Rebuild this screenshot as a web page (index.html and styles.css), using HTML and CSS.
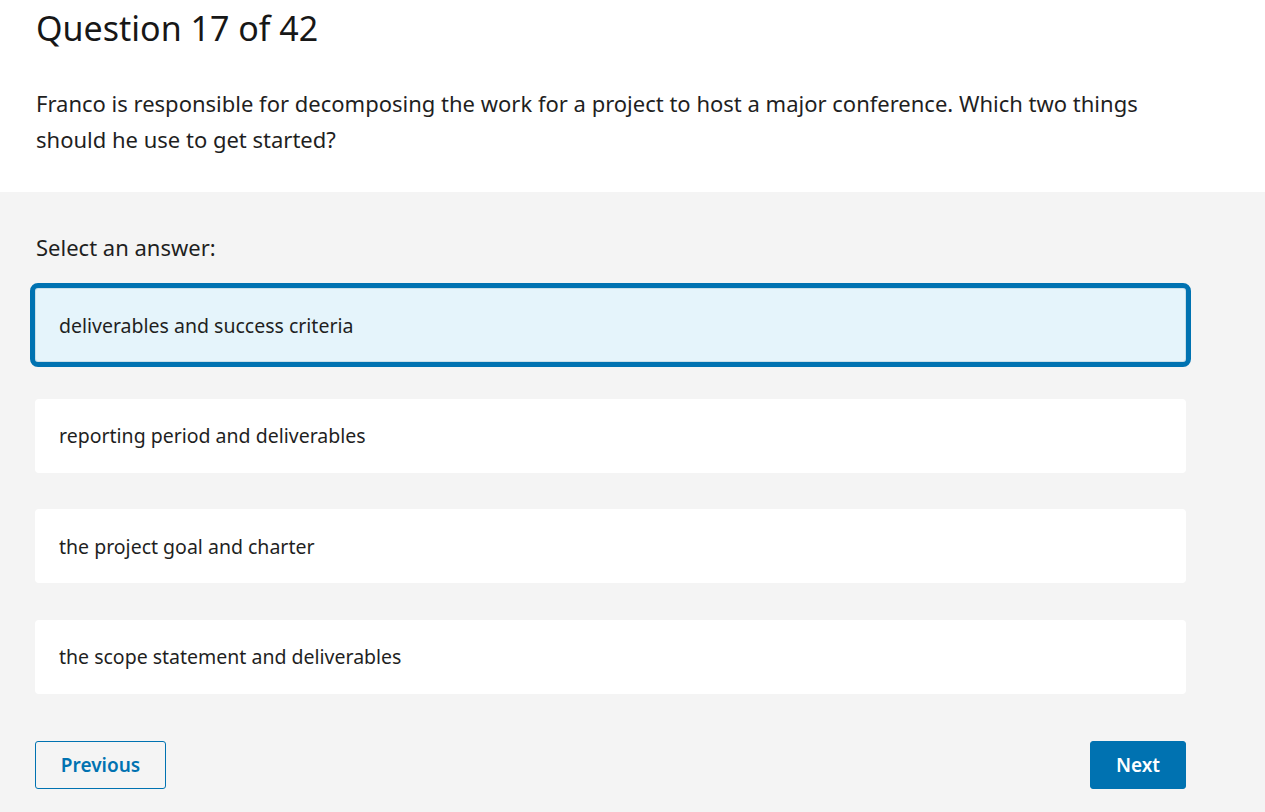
FILE: index.html
```html
<!DOCTYPE html>
<html lang="en">
<head>
<meta charset="utf-8">
<title>Question 17 of 42</title>
<link rel="stylesheet" href="styles.css">
</head>
<body>
<header class="top">
  <h1 class="title">Question 17 of 42</h1>
  <p class="question">Franco is responsible for decomposing the work for a project to host a major conference. Which two things should he use to get started?</p>
</header>
<main class="answers">
  <p class="prompt">Select an answer:</p>
  <div class="options">
    <button class="option selected">deliverables and success criteria</button>
    <button class="option">reporting period and deliverables</button>
    <button class="option">the project goal and charter</button>
    <button class="option">the scope statement and deliverables</button>
  </div>
  <div class="nav">
    <button class="btn btn-prev">Previous</button>
    <button class="btn btn-next">Next</button>
  </div>
</main>
</body>
</html>
```
FILE: styles.css
```css
html, body {
  margin: 0;
  padding: 0;
  height: 100%;
}
body {
  font-family: "Noto Sans", "Open Sans", sans-serif;
  color: #1f1f1f;
  background: #f4f4f4;
}
.top {
  background: #ffffff;
  padding: 6px 36px 0 36px;
  height: 186px;
}
.title {
  margin: 0;
  font-weight: 400;
  font-size: 34px;
  line-height: 44px;
  color: #171717;
}
.question {
  margin: 35px 0 0 0;
  font-size: 22px;
  line-height: 36px;
  width: 1150px;
}
.answers {
  padding: 38px 0 0 35px;
  width: 1151px;
}
.prompt {
  margin: 0 0 0 1px;
  font-size: 22px;
  line-height: 34px;
}
.options {
  display: flex;
  flex-direction: column;
  gap: 36.5px;
  margin-top: 24px;
}
.option {
  display: block;
  width: 100%;
  height: 74px;
  background: #ffffff;
  border: none;
  border-radius: 4px;
  padding: 0 24px;
  text-align: left;
  font-family: inherit;
  font-size: 19.5px;
  color: #1f1f1f;
  cursor: pointer;
}
.option.selected {
  background: #e5f4fb;
  outline: 5px solid #0072b1;
  outline-offset: 0;
  box-shadow: inset 0 0 0 1px #c9dfe9;
  border-radius: 3px;
}
.nav {
  display: flex;
  justify-content: space-between;
  margin-top: 47px;
}
.btn {
  height: 48px;
  font-family: inherit;
  font-size: 19px;
  font-weight: 600;
  border-radius: 3px;
  cursor: pointer;
}
.btn-prev {
  width: 131px;
  background: transparent;
  border: 1px solid #0072b1;
  color: #0072b1;
}
.btn-next {
  width: 96px;
  background: #0072b1;
  border: 1px solid #0072b1;
  color: #ffffff;
}
```
